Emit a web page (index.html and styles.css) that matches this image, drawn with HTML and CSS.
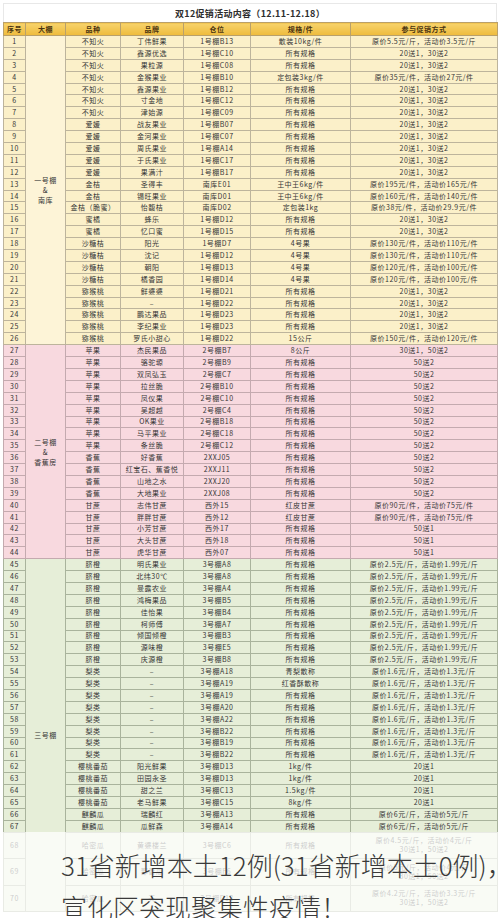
FILE: index.html
```html
<!DOCTYPE html>
<html lang="zh-CN">
<head>
<meta charset="utf-8">
<title>双12促销活动内容</title>
<link rel="stylesheet" href="styles.css">
</head>
<body>
<div class="page">
  <div class="title">双12促销活动内容（12.11-12.18）</div>
  <table class="t">
    <colgroup>
      <col class="c1"><col class="c2"><col class="c3"><col class="c4"><col class="c5"><col class="c6"><col class="c7">
    </colgroup>
    <thead>
      <tr class="head"><th>序号</th><th>大棚</th><th>品种</th><th>品牌</th><th>仓位</th><th>规格/件</th><th>参与促销方式</th></tr>
    </thead>
    <tbody class="g1">
      <tr><td>1</td><td class="shed" rowspan="26">一号棚<br>&amp;<br>南库</td><td>不知火</td><td>丁伟鲜果</td><td>1号棚B13</td><td>散装10kg/件</td><td>原价5.5元/斤，活动价3.5元/斤</td></tr>
      <tr><td>2</td><td>不知火</td><td>鑫源优选</td><td>1号棚C10</td><td>所有规格</td><td>20送1，30送2</td></tr>
      <tr><td>3</td><td>不知火</td><td>果粒源</td><td>1号棚C08</td><td>所有规格</td><td>20送1，30送2</td></tr>
      <tr><td>4</td><td>不知火</td><td>金猴果业</td><td>1号棚B10</td><td>定包装3kg/件</td><td>原价35元/件，活动价27元/件</td></tr>
      <tr><td>5</td><td>不知火</td><td>鑫源果业</td><td>1号棚B12</td><td>所有规格</td><td>20送1，30送2</td></tr>
      <tr><td>6</td><td>不知火</td><td>寸金地</td><td>1号棚C12</td><td>所有规格</td><td>20送1，30送2</td></tr>
      <tr><td>7</td><td>不知火</td><td>津始源</td><td>1号棚C09</td><td>所有规格</td><td>20送1，30送2</td></tr>
      <tr><td>8</td><td>爱媛</td><td>战友果业</td><td>1号棚B07</td><td>所有规格</td><td>20送1，30送2</td></tr>
      <tr><td>9</td><td>爱媛</td><td>金河果业</td><td>1号棚C07</td><td>所有规格</td><td>20送1，30送2</td></tr>
      <tr><td>10</td><td>爱媛</td><td>周氏果业</td><td>1号棚A14</td><td>所有规格</td><td>20送1，30送2</td></tr>
      <tr><td>11</td><td>爱媛</td><td>于氏果业</td><td>1号棚C17</td><td>所有规格</td><td>20送1，30送2</td></tr>
      <tr><td>12</td><td>爱媛</td><td>果满汁</td><td>1号棚B17</td><td>所有规格</td><td>20送1，30送2</td></tr>
      <tr><td>13</td><td>金桔</td><td>圣得丰</td><td>南库E01</td><td>王中王6kg/件</td><td>原价195元/件，活动价165元/件</td></tr>
      <tr><td>14</td><td>金桔</td><td>锡旺果业</td><td>南库D01</td><td>王中王6kg/件</td><td>原价160元/件，活动价140元/件</td></tr>
      <tr><td>15</td><td>金桔（脆蜜）</td><td>怡馥桔</td><td>南库D02</td><td>定包装1kg</td><td>原价38元/件，活动价29.9元/件</td></tr>
      <tr><td>16</td><td>蜜橘</td><td>蜂乐</td><td>1号棚D12</td><td>所有规格</td><td>20送1，30送2</td></tr>
      <tr><td>17</td><td>蜜橘</td><td>忆口蜜</td><td>1号棚D15</td><td>所有规格</td><td>20送1，30送2</td></tr>
      <tr><td>18</td><td>沙糖桔</td><td>阳光</td><td>1号棚D7</td><td>4号果</td><td>原价130元/件，活动价110元/件</td></tr>
      <tr><td>19</td><td>沙糖桔</td><td>沈记</td><td>1号棚D12</td><td>4号果</td><td>原价130元/件，活动价110元/件</td></tr>
      <tr><td>20</td><td>沙糖桔</td><td>朝阳</td><td>1号棚D13</td><td>4号果</td><td>原价120元/件，活动价100元/件</td></tr>
      <tr><td>21</td><td>沙糖桔</td><td>橘香园</td><td>1号棚D14</td><td>4号果</td><td>原价120元/件，活动价100元/件</td></tr>
      <tr><td>22</td><td>猕猴桃</td><td>鲜婆婆</td><td>1号棚D21</td><td>所有规格</td><td>20送1，30送2</td></tr>
      <tr><td>23</td><td>猕猴桃</td><td>–</td><td>1号棚D22</td><td>所有规格</td><td>20送1，30送2</td></tr>
      <tr><td>24</td><td>猕猴桃</td><td>鹏达果品</td><td>1号棚D23</td><td>所有规格</td><td>20送1，30送2</td></tr>
      <tr><td>25</td><td>猕猴桃</td><td>李纪果业</td><td>1号棚D23</td><td>所有规格</td><td>20送1，30送2</td></tr>
      <tr><td>26</td><td>猕猴桃</td><td>罗氏小甜心</td><td>1号棚D22</td><td>15公斤</td><td>原价150元/件，活动价120元/件</td></tr>
    </tbody>
    <tbody class="g2">
      <tr><td>27</td><td class="shed" rowspan="18">二号棚<br>&amp;<br>香蕉房</td><td>苹果</td><td>杰民果品</td><td>2号棚B7</td><td>8公斤</td><td>30送1，50送2</td></tr>
      <tr><td>28</td><td>苹果</td><td>骆驼塬</td><td>2号棚B9</td><td>所有规格</td><td>50送2</td></tr>
      <tr><td>29</td><td>苹果</td><td>双凤弘玉</td><td>2号棚C7</td><td>所有规格</td><td>50送2</td></tr>
      <tr><td>30</td><td>苹果</td><td>拉丝脆</td><td>2号棚B10</td><td>所有规格</td><td>50送2</td></tr>
      <tr><td>31</td><td>苹果</td><td>凤仪果</td><td>2号棚C10</td><td>所有规格</td><td>50送2</td></tr>
      <tr><td>32</td><td>苹果</td><td>吴超越</td><td>2号棚C4</td><td>所有规格</td><td>50送2</td></tr>
      <tr><td>33</td><td>苹果</td><td>OK果业</td><td>2号棚B18</td><td>所有规格</td><td>50送2</td></tr>
      <tr><td>34</td><td>苹果</td><td>马平果业</td><td>2号棚C18</td><td>所有规格</td><td>50送2</td></tr>
      <tr><td>35</td><td>苹果</td><td>条丝脆</td><td>2号棚C12</td><td>所有规格</td><td>50送2</td></tr>
      <tr><td>36</td><td>香蕉</td><td>好香蕉</td><td>2XXJ05</td><td>所有规格</td><td>50送2</td></tr>
      <tr><td>37</td><td>香蕉</td><td>红宝石、蕉香悦</td><td>2XXJ11</td><td>所有规格</td><td>50送2</td></tr>
      <tr><td>38</td><td>香蕉</td><td>山地之水</td><td>2XXJ20</td><td>所有规格</td><td>50送2</td></tr>
      <tr><td>39</td><td>香蕉</td><td>大地果业</td><td>2XXJ08</td><td>所有规格</td><td>50送2</td></tr>
      <tr><td>40</td><td>甘蔗</td><td>志伟甘蔗</td><td>西外15</td><td>红皮甘蔗</td><td>原价90元/件，活动价75元/件</td></tr>
      <tr><td>41</td><td>甘蔗</td><td>胖胖甘蔗</td><td>西外12</td><td>红皮甘蔗</td><td>原价90元/件，活动价75元/件</td></tr>
      <tr><td>42</td><td>甘蔗</td><td>小芳甘蔗</td><td>西外17</td><td>所有规格</td><td>50送1</td></tr>
      <tr><td>43</td><td>甘蔗</td><td>大头甘蔗</td><td>西外18</td><td>所有规格</td><td>50送1</td></tr>
      <tr><td>44</td><td>甘蔗</td><td>虎华甘蔗</td><td>西外07</td><td>所有规格</td><td>50送1</td></tr>
    </tbody>
    <tbody class="g3">
      <tr><td>45</td><td class="shed" rowspan="26">三号棚</td><td>脐橙</td><td>明氏果业</td><td>3号棚A8</td><td>所有规格</td><td>原价2.5元/斤，活动价1.99元/斤</td></tr>
      <tr><td>46</td><td>脐橙</td><td>北纬30℃</td><td>3号棚A8</td><td>所有规格</td><td>原价2.5元/斤，活动价1.99元/斤</td></tr>
      <tr><td>47</td><td>脐橙</td><td>曼露农业</td><td>3号棚A4</td><td>所有规格</td><td>原价2.5元/斤，活动价1.99元/斤</td></tr>
      <tr><td>48</td><td>脐橙</td><td>鸿梅果品</td><td>3号棚B5</td><td>所有规格</td><td>原价2.5元/斤，活动价1.99元/斤</td></tr>
      <tr><td>49</td><td>脐橙</td><td>佳怡果</td><td>3号棚B4</td><td>所有规格</td><td>原价2.5元/斤，活动价1.99元/斤</td></tr>
      <tr><td>50</td><td>脐橙</td><td>柯师傅</td><td>3号棚A7</td><td>所有规格</td><td>原价2.5元/斤，活动价1.99元/斤</td></tr>
      <tr><td>51</td><td>脐橙</td><td>倾国倾橙</td><td>3号棚B3</td><td>所有规格</td><td>原价2.5元/斤，活动价1.99元/斤</td></tr>
      <tr><td>52</td><td>脐橙</td><td>源味橙</td><td>3号棚E5</td><td>所有规格</td><td>原价2.5元/斤，活动价1.99元/斤</td></tr>
      <tr><td>53</td><td>脐橙</td><td>庆源橙</td><td>3号棚B8</td><td>所有规格</td><td>原价2.5元/斤，活动价1.99元/斤</td></tr>
      <tr><td>54</td><td>梨类</td><td>–</td><td>3号棚A18</td><td>青梨散称</td><td>原价1.6元/斤，活动价1.3元/斤</td></tr>
      <tr><td>55</td><td>梨类</td><td>–</td><td>3号棚A19</td><td>红香酥散称</td><td>原价1.6元/斤，活动价1.3元/斤</td></tr>
      <tr><td>56</td><td>梨类</td><td>–</td><td>3号棚A19</td><td>所有规格</td><td>原价1.6元/斤，活动价1.3元/斤</td></tr>
      <tr><td>57</td><td>梨类</td><td>–</td><td>3号棚A20</td><td>所有规格</td><td>原价1.6元/斤，活动价1.3元/斤</td></tr>
      <tr><td>58</td><td>梨类</td><td>–</td><td>3号棚A22</td><td>所有规格</td><td>原价1.6元/斤，活动价1.3元/斤</td></tr>
      <tr><td>59</td><td>梨类</td><td>–</td><td>3号棚B22</td><td>所有规格</td><td>原价1.6元/斤，活动价1.3元/斤</td></tr>
      <tr><td>60</td><td>梨类</td><td>–</td><td>3号棚B19</td><td>所有规格</td><td>原价1.6元/斤，活动价1.3元/斤</td></tr>
      <tr><td>61</td><td>梨类</td><td>–</td><td>3号棚B22</td><td>所有规格</td><td>原价1.6元/斤，活动价1.3元/斤</td></tr>
      <tr><td>62</td><td>樱桃番茄</td><td>阳光鲜果</td><td>3号棚D13</td><td>1kg/件</td><td>20送1</td></tr>
      <tr><td>63</td><td>樱桃番茄</td><td>田园永圣</td><td>3号棚D13</td><td>1kg/件</td><td>20送1</td></tr>
      <tr><td>64</td><td>樱桃番茄</td><td>甜之兰</td><td>3号棚C13</td><td>1.5kg/件</td><td>20送1</td></tr>
      <tr><td>65</td><td>樱桃番茄</td><td>老马鲜果</td><td>3号棚C15</td><td>8kg/件</td><td>20送1</td></tr>
      <tr><td>66</td><td>麒麟瓜</td><td>瑞麟红</td><td>3号棚A13</td><td>所有规格</td><td>原价6元/斤，活动价5元/斤</td></tr>
      <tr><td>67</td><td>麒麟瓜</td><td>瓜鲜森</td><td>3号棚A14</td><td>所有规格</td><td>原价6元/斤，活动价5元/斤</td></tr>
      <tr class="tall"><td>68</td><td>哈密瓜</td><td>黄婆楼兰</td><td>3号棚C6</td><td>所有规格</td><td>原价4.5元/斤，活动价4元/斤<br>30送1，50送2</td></tr>
      <tr class="tall"><td>69</td><td>哈密瓜</td><td>鄯善瓜</td><td>3号棚F6</td><td>所有规格</td><td>原价5元/斤，活动价4元/斤<br>30送1，50送2</td></tr>
      <tr class="tall"><td>70</td><td>哈密瓜</td><td>天</td><td>3号棚D13</td><td>所有规格</td><td>原价4.2元/斤，活动价3.3元/斤<br>30送1，50送2</td></tr>
    </tbody>
  </table>
  <div class="veil">
    <p class="headline">31省新增本土12例(31省新增本土0例)，<br>宣化区突现聚集性疫情！</p>
  </div>
</div>
</body>
</html>
```

FILE: styles.css
```css
html, body {
  margin: 0;
  padding: 0;
  background: #ffffff;
}

.page {
  position: relative;
  width: 500px;
  height: 918px;
  overflow: hidden;
  padding-top: 3px;
  box-sizing: border-box;
  font-family: "Noto Sans CJK SC", "Liberation Sans", sans-serif;
}

.title {
  margin: 0 3px;
  height: 19px;
  box-sizing: border-box;
  border: 1px solid #e8e8e8;
  border-bottom: none;
  text-align: center;
  font-size: 9px;
  font-weight: bold;
  line-height: 19px;
  color: #2e2e2e;
  letter-spacing: 0.3px;
}

.t {
  margin-left: 3px;
  width: 494px;
  border-collapse: collapse;
  table-layout: fixed;
  font-size: 7px;
  letter-spacing: 0.5px;
  color: #363636;
}

.c1 { width: 22px; }
.c2 { width: 40px; }
.c3 { width: 55px; }
.c4 { width: 63px; }
.c5 { width: 67px; }
.c6 { width: 100px; }
.c7 { width: 147px; }

.t th,
.t td {
  padding: 0;
  text-align: center;
  vertical-align: middle;
  line-height: 9px;
  white-space: nowrap;
  overflow: hidden;
}

.t tr { height: 11.9px; }
.t tr.tall { height: 26.5px; }

.head th {
  height: 12px;
  background: linear-gradient(#f7d36c, #eebb3c);
  color: #4a3410;
  font-weight: bold;
  border: 1px solid #b9a06a;
}

.g1 td {
  background: #fbf0c9;
  border: 1px solid #bdb49c;
}
.g1 td.shed { background: #fdf4d7; }

.g2 td {
  background: #f8d9df;
  border: 1px solid #c4aaaf;
}

.g3 td {
  background: #e6eed8;
  border: 1px solid #a9b39c;
}

.t td.shed {
  line-height: 10px;
  font-size: 7px;
}

.veil {
  position: absolute;
  left: 0;
  right: 0;
  top: 832px;
  bottom: 0;
  background: rgba(255, 255, 255, 0.74);
}

.headline {
  margin: 0;
  padding: 12px 0 0 61px;
  font-size: 26px;
  line-height: 42px;
  font-weight: 300;
  color: #3a3a3a;
  white-space: nowrap;
  letter-spacing: 0;
}
```
